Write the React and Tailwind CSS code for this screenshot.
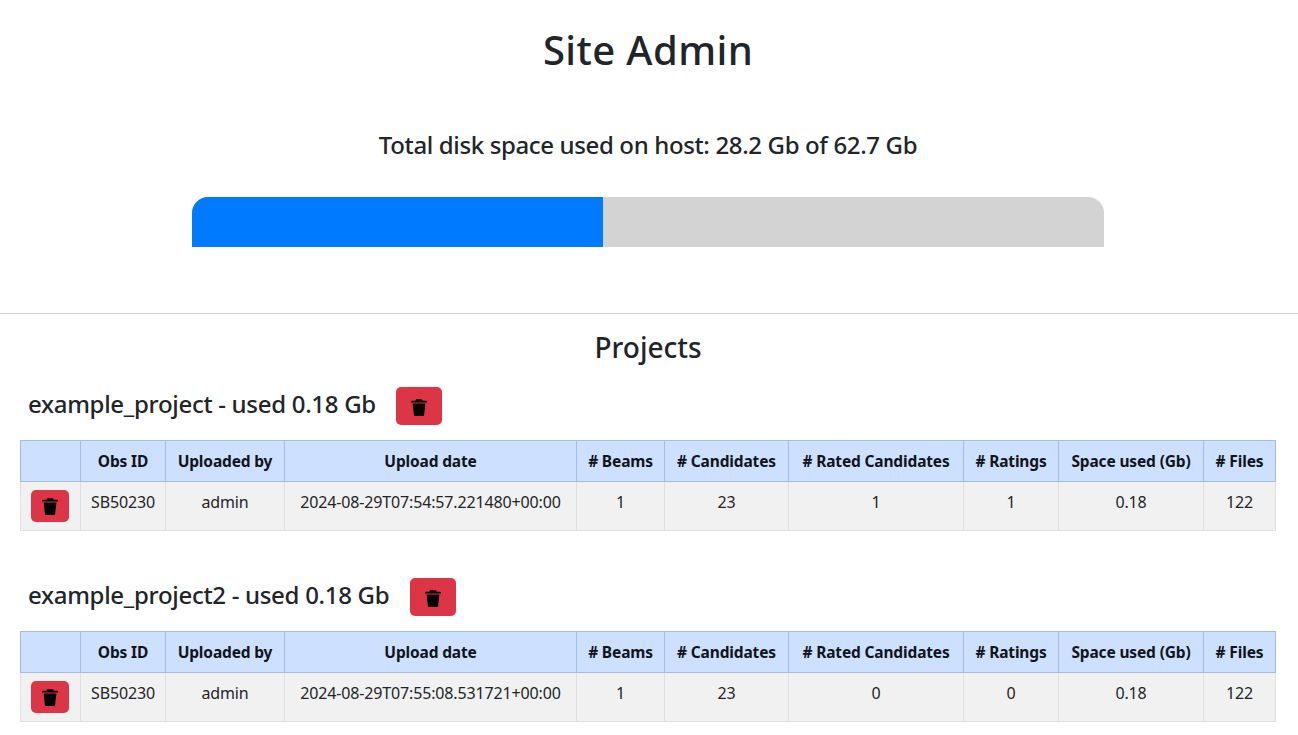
import React from "react";

const cols = ["w-[60px]", "w-[85px]", "w-[119px]", "w-[292px]", "w-[88px]", "w-[124px]", "w-[175px]", "w-[95px]", "w-[145px]", "w-[72px]"];
const heads = ["", "Obs ID", "Uploaded by", "Upload date", "# Beams", "# Candidates", "# Rated Candidates", "# Ratings", "Space used (Gb)", "# Files"];

function TrashIcon({ className }) {
  return (
    <svg viewBox="0 0 16 17" className={className} fill="currentColor" aria-hidden="true">
      <path d="M5.2 0.2h5.6l1 1.6H15a1 1 0 0 1 1 1v0.8H0V2.8a1 1 0 0 1 1-1h3.2z" />
      <path d="M1.6 4.6h12.8l-1.3 11.3a1.2 1.2 0 0 1-1.2 1.1H4.1a1.2 1.2 0 0 1-1.2-1.1z" />
    </svg>
  );
}

function Project({ name, date, rated, ratings, space, gap }) {
  const cells = ["SB50230", "admin", date, "1", "23", rated, ratings, "0.18", "122"];
  return (
    <section>
      <div className="flex items-start h-[38px] pl-[28px]">
        <h3 className="text-[24px] leading-[29px] mt-[2px] font-medium tracking-[-0.3px]">{name} - used {space} Gb</h3>
        <button className={`${gap} w-[46px] h-[38px] rounded-[5px] bg-[#dc3545] flex items-center justify-center text-black`}>
          <TrashIcon className="w-[16px] h-[17px] mt-[3px]" />
        </button>
      </div>
      <table className="table-fixed border-collapse w-[1255px] ml-[20px] mt-[15px] text-center text-[16px] leading-[24px]">
        <colgroup>{cols.map((c, i) => <col key={i} className={c} />)}</colgroup>
        <thead>
          <tr className="h-[41px] bg-[#cde0ff]">
            {heads.map((h, i) => (
              <th key={i} className="border border-[#a7bbdb] p-0 font-bold text-[15.5px] text-[#111418] tracking-[-0.15px] whitespace-nowrap">{h}</th>
            ))}
          </tr>
        </thead>
        <tbody>
          <tr className="h-[49px] bg-[#f1f1f1]">
            <td className="border border-[#dddfe3] p-0">
              <button className="ml-[10px] w-[38px] h-[32px] rounded-[5px] bg-[#dc3545] flex items-center justify-center text-black">
                <TrashIcon className="w-[16px] h-[17px] mt-[1px]" />
              </button>
            </td>
            {cells.map((c, i) => (
              <td key={i} className="border border-[#dddfe3] p-0 pb-[8px] text-[16px] tracking-[-0.15px] whitespace-nowrap">{c}</td>
            ))}
          </tr>
        </tbody>
      </table>
    </section>
  );
}

export default function App() {
  return (
    <div className="bg-white text-[#212529] font-['Noto_Sans','Open_Sans',sans-serif]">
      <h1 className="pt-[26px] pr-[2px] text-center text-[40px] leading-[48px] font-medium tracking-[0.4px]">Site Admin</h1>
      <p className="mt-[53px] pr-[2px] text-center text-[24px] leading-[36px] font-medium tracking-[-0.36px]">Total disk space used on host: 28.2 Gb of 62.7 Gb</p>
      <div className="ml-[192px] mt-[34px] flex h-[50px] w-[912px] overflow-hidden rounded-t-[16px] bg-[#d3d3d3]">
        <div className="h-full w-[411px] bg-[#007bff]" />
      </div>
      <hr className="mt-[66px] border-t border-[#d0d0d0]" />
      <h2 className="mt-[15px] pr-[2px] text-center text-[28px] leading-[36px] font-medium">Projects</h2>
      <div className="mt-[22px]">
        <Project gap="ml-[20px]" name="example_project" date="2024-08-29T07:54:57.221480+00:00" rated="1" ratings="1" space="0.18" />
      </div>
      <div className="mt-[47px]">
        <Project gap="ml-[21px]" name="example_project2" date="2024-08-29T07:55:08.531721+00:00" rated="0" ratings="0" space="0.18" />
      </div>
    </div>
  );
}
